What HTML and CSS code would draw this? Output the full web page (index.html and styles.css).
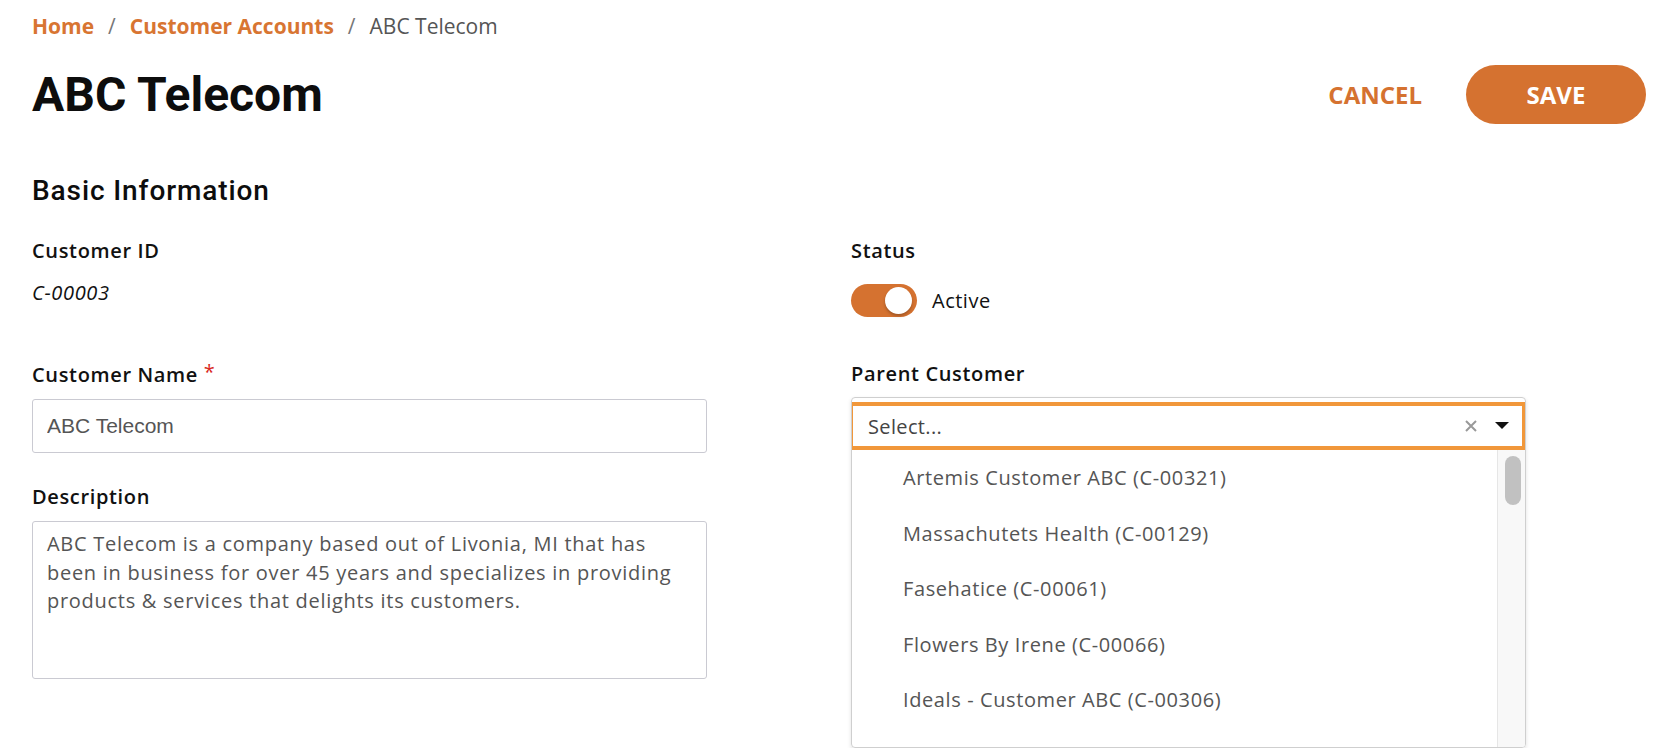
FILE: index.html
```html
<!DOCTYPE html>
<html lang="en">
<head>
  <meta charset="UTF-8">
  <title>ABC Telecom - Customer Accounts</title>
  <link rel="stylesheet" href="styles.css">
</head>
<body>

<div class="page">
  <nav class="breadcrumb">
    <a href="#" class="crumb-link">Home</a>
    <span class="crumb-sep">/</span>
    <a href="#" class="crumb-link">Customer Accounts</a>
    <span class="crumb-sep">/</span>
    <span class="crumb-current">ABC Telecom</span>
  </nav>

  <div class="page-header">
    <h1 class="page-title">ABC Telecom</h1>
    <div class="actions">
      <button class="btn-text">CANCEL</button>
      <button class="btn-save">SAVE</button>
    </div>
  </div>

  <h2 class="section-title">Basic Information</h2>

  <div class="form-grid">
    <div class="form-col">
      <div class="label">Customer ID</div>
      <div class="readonly-value">C-00003</div>

      <div class="label label-name">Customer Name <span class="required">*</span></div>
      <input class="text-input" type="text" value="ABC Telecom">

      <div class="label label-desc">Description</div>
      <textarea class="text-area">ABC Telecom is a company based out of Livonia, MI that has been in business for over 45 years and specializes in providing products &amp; services that delights its customers.</textarea>
    </div>

    <div class="form-col">
      <div class="label">Status</div>
      <div class="toggle-row">
        <span class="toggle"><span class="toggle-knob"></span></span>
        <span class="toggle-text">Active</span>
      </div>

      <div class="label label-parent">Parent Customer</div>
      <div class="select">
        <div class="select-control">
          <span class="select-placeholder">Select...</span>
          <svg class="select-clear" width="12" height="12" viewBox="0 0 12 12">
            <path d="M1 1 L11 11 M11 1 L1 11" stroke="#999" stroke-width="2" fill="none"/>
          </svg>
          <svg class="select-caret" width="14" height="8" viewBox="0 0 14 8">
            <path d="M0 0 L14 0 L7 7 Z" fill="#111"/>
          </svg>
        </div>
        <div class="select-menu">
          <ul class="option-list">
            <li class="option">Artemis Customer ABC (C-00321)</li>
            <li class="option">Massachutets Health (C-00129)</li>
            <li class="option">Fasehatice (C-00061)</li>
            <li class="option">Flowers By Irene (C-00066)</li>
            <li class="option">Ideals - Customer ABC (C-00306)</li>
            <li class="option">Jupiter Logistics Holdings (C-00214)</li>
          </ul>
          <div class="scrollbar"><div class="scroll-thumb"></div></div>
        </div>
      </div>
    </div>
  </div>
</div>

</body>
</html>
```

FILE: styles.css
```css
body {
  margin: 0;
  background: #ffffff;
  font-family: 'Open Sans', 'Liberation Sans', sans-serif;
  color: #111;
}

.page {
  padding: 12px 22px 0 32px;
}

/* Breadcrumb */
.breadcrumb {
  font-size: 21px;
  line-height: 29px;
  display: flex;
  align-items: baseline;
}

.crumb-link {
  color: #d87532;
  font-weight: 700;
  text-decoration: none;
}

.crumb-sep {
  color: #777;
  margin: 0 14px;
}

.crumb-current {
  color: #555;
}

/* Header */
.page-header {
  margin-top: 24px;
  display: flex;
  justify-content: space-between;
  align-items: center;
  height: 59px;
}

.page-title {
  margin: 0;
  font-family: Roboto, 'Liberation Sans', sans-serif;
  font-weight: 700;
  font-size: 48px;
  color: #0d0d0d;
}

.actions {
  display: flex;
  align-items: center;
  gap: 44px;
}

.btn-text {
  background: none;
  border: none;
  padding: 0;
  font-family: 'Open Sans', sans-serif;
  font-weight: 700;
  font-size: 24px;
  color: #d57230;
  cursor: pointer;
}

.btn-save {
  width: 180px;
  height: 59px;
  border: none;
  border-radius: 30px;
  background-color: #d57230;
  color: #fff;
  font-family: 'Open Sans', sans-serif;
  font-weight: 700;
  font-size: 24px;
  cursor: pointer;
}

.section-title {
  margin: 50px 0 0;
  font-family: Roboto, 'Liberation Sans', sans-serif;
  font-weight: 500;
  font-size: 28px;
  line-height: 33px;
  letter-spacing: 0.9px;
  color: #0d0d0d;
}

/* Form */
.form-grid {
  margin-top: 30px;
  display: grid;
  grid-template-columns: 675px 675px;
  column-gap: 144px;
  letter-spacing: 0.65px;
}

.form-col {
  display: flex;
  flex-direction: column;
}

.label {
  font-size: 20px;
  line-height: 28px;
  font-weight: 600;
  color: #111;
}

.required {
  color: #d9281e;
  font-weight: 400;
  position: relative;
  top: -3px;
}

.readonly-value {
  margin-top: 14px;
  font-size: 20px;
  line-height: 28px;
  font-style: italic;
  color: #111;
}

.label-name {
  margin-top: 54px;
}

.text-input {
  margin-top: 10px;
  box-sizing: border-box;
  width: 100%;
  height: 54px;
  border: 1px solid #cacad2;
  border-radius: 3px;
  padding: 0 14px;
  font-family: 'Liberation Sans', Arial, sans-serif;
  font-size: 21px;
  letter-spacing: 0;
  color: #555;
}

.label-desc {
  margin-top: 30px;
}

.text-area {
  margin-top: 10px;
  box-sizing: border-box;
  width: 100%;
  height: 158px;
  border: 1px solid #cacad2;
  border-radius: 3px;
  padding: 8px 14px;
  font-family: 'Open Sans', sans-serif;
  font-size: 20px;
  line-height: 28.7px;
  letter-spacing: 0.72px;
  color: #555;
  resize: none;
  overflow: hidden;
}

/* Status toggle */
.toggle-row {
  margin-top: 19px;
  display: flex;
  align-items: center;
  gap: 15px;
}

.toggle {
  width: 66px;
  height: 33px;
  border-radius: 17px;
  background-color: #d57230;
  display: flex;
  align-items: center;
  justify-content: flex-end;
  padding-right: 5px;
  box-sizing: border-box;
}

.toggle-knob {
  width: 27px;
  height: 27px;
  border-radius: 50%;
  background: #fff;
  box-shadow: 0 2px 3px rgba(0, 0, 0, 0.25);
}

.toggle-text {
  font-size: 20px;
  letter-spacing: 0.5px;
  color: #111;
}

/* Parent customer select */
.label-parent {
  margin-top: 43px;
}

.select {
  margin-top: 9px;
  height: 351px;
  box-sizing: border-box;
  border: 1px solid #cfcfcf;
  border-radius: 4px;
  box-shadow: 0 2px 4px rgba(0, 0, 0, 0.12);
  display: flex;
  flex-direction: column;
  overflow: hidden;
}

.select-control {
  margin: 4px -1px 0 -3px;
  height: 48px;
  box-sizing: border-box;
  border: 4px solid #f1973a;
  display: flex;
  align-items: center;
  padding: 0 13px 0 15px;
}

.select-placeholder {
  flex: 1;
  font-size: 20px;
  letter-spacing: 0.35px;
  color: #444;
}

.select-clear {
  margin-right: 18px;
}

.select-menu {
  flex: 1;
  display: flex;
  min-height: 0;
}

.option-list {
  flex: 1;
  list-style: none;
  margin: 0;
  padding: 0;
  overflow: hidden;
}

.option {
  height: 55.5px;
  line-height: 55.5px;
  padding-left: 51px;
  font-size: 20px;
  letter-spacing: 0.6px;
  color: #555;
}

.scrollbar {
  width: 28px;
  background: #f8f8f8;
  border-left: 1px solid #e6e6e6;
  box-sizing: border-box;
  padding: 6px 0 0 7px;
}

.scroll-thumb {
  width: 16px;
  height: 49px;
  border-radius: 8px;
  background: #c1c1c1;
}
```
